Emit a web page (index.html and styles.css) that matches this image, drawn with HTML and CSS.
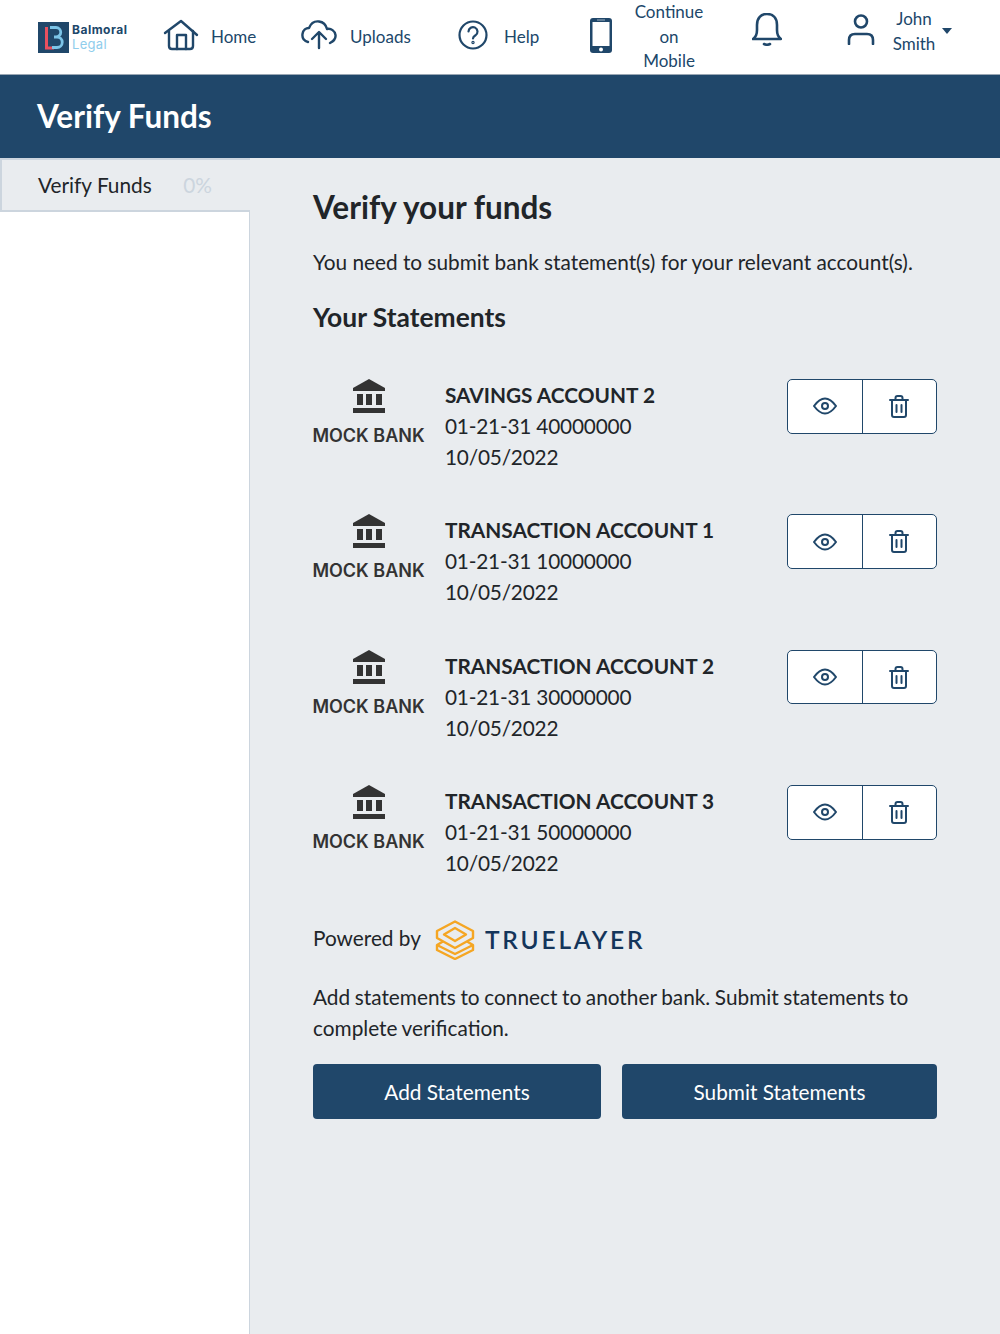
FILE: index.html
```html
<!DOCTYPE html>
<html lang="en">
<head>
  <meta charset="UTF-8" />
  <meta name="viewport" content="width=device-width, initial-scale=1.0" />
  <title>Verify Funds</title>
  <link rel="stylesheet" href="styles.css">
</head>
<body>
  <header class="topbar">
    <a class="logo" href="#">
      <svg class="logo-mark" viewBox="0 0 31 31" width="31" height="31">
        <rect width="31" height="31" fill="#20476a"/>
        <path d="M8.500 5v21h7.500" fill="none" stroke="#e8505f" stroke-width="3"/>
        <path d="M12 5.500h6a4.600 4.600 0 0 1 0 9.500h-2h3a5 5 0 0 1 0 10.500h-5" fill="none" stroke="#7cc4e8" stroke-width="2.800"/>
      </svg>
      <span class="logo-text"><b>Balmoral</b><i>Legal</i></span>
    </a>
    <a class="nav-item nav-home" href="#">
      <svg width="36" height="32" viewBox="0 0 36 32" fill="none" stroke="#20476a" stroke-width="2.400" stroke-linecap="round" stroke-linejoin="round"><path d="M2 14 18 2l16 14"/><path d="M6 12v15q0 3 3 3h18q3 0 3-3V12"/><path d="M14 30V16h9v14"/></svg>
      <span>Home</span>
    </a>
    <a class="nav-item nav-uploads" href="#">
      <svg width="36" height="30" viewBox="0 0 36 30" fill="none" stroke="#20476a" stroke-width="2.400" stroke-linecap="round" stroke-linejoin="round"><path d="M7 22C3 21 1 18 1.500 14S5 8 8 8C10 3 14 1 18 1.500S25 5 26 9c4-1 8 2 8.500 6S33 21 29 23"/><path d="M18 28V13M11 19l7-7 7 7"/></svg>
      <span>Uploads</span>
    </a>
    <a class="nav-item nav-help" href="#">
      <svg width="30" height="30" viewBox="0 0 30 30" fill="none" stroke="#20476a" stroke-width="2.200" stroke-linecap="round"><circle cx="15" cy="15" r="13.500"/><path d="M10.500 11.500a4.500 4.500 0 1 1 7 3.800c-1.600 1-2.500 1.700-2.500 3.200"/><circle cx="15" cy="22.500" r=".6"/></svg>
      <span>Help</span>
    </a>
    <a class="nav-item nav-mobile" href="#">
      <svg width="22" height="35" viewBox="0 0 22 35"><rect width="22" height="35" rx="3" fill="#20476a"/><rect x="2.500" y="4" width="17" height="24" fill="#fff"/><circle cx="11" cy="31.500" r="2" fill="#fff"/><rect x="7" y="1.500" width="8" height="1" fill="#9fb3c4"/></svg>
      <span class="nav-mobile-text">Continue on Mobile</span>
    </a>
    <a class="nav-bell" href="#">
      <svg width="30" height="33" viewBox="0 0 30 33" fill="none" stroke="#20476a" stroke-width="2.600" stroke-linecap="round" stroke-linejoin="round"><path d="M1 26c3-2 4-5 4-9v-5C5 5 9 1 15 1s10 4 10 11v5c0 4 1 7 4 9z"/><path d="M12 31q3 1.500 6 0"/></svg>
    </a>
    <a class="nav-item nav-user" href="#">
      <svg width="28" height="31" viewBox="0 0 28 31" fill="none" stroke="#20476a" stroke-width="2.600" stroke-linecap="round"><circle cx="14" cy="7.500" r="6"/><path d="M2 30v-4q0-6 6-6h12q6 0 6 6v4"/></svg>
      <span class="nav-user-text">John Smith</span>
      <span class="caret"></span>
    </a>
  </header>

  <div class="banner"><h1>Verify Funds</h1></div>

  <div class="layout">
    <aside class="sidebar">
      <div class="step">
        <span>Verify Funds</span>
        <span class="step-pct">0%</span>
      </div>
    </aside>

    <main class="content">
      <h2>Verify your funds</h2>
      <p class="intro">You need to submit bank statement(s) for your relevant account(s).</p>
      <h3>Your Statements</h3>

      <div class="statements">
        <div class="statement">
          <div class="bank">
            <svg width="32" height="34" viewBox="0 0 32 34" fill="#333"><path d="M16 0 32 9v3H0V9z"/><rect x="4" y="15" width="6" height="11"/><rect x="13" y="15" width="6" height="11"/><rect x="23" y="15" width="6" height="11"/><rect y="29" width="32" height="5"/></svg>
            <span>MOCK BANK</span>
          </div>
          <div class="details">
            <strong>SAVINGS ACCOUNT 2</strong>
            <span>01-21-31 40000000</span>
            <span>10/05/2022</span>
          </div>
          <div class="actions">
            <button><svg width="24" height="18" viewBox="0 0 24 18" fill="none" stroke="#20476a" stroke-width="2"><path d="M1 9q11-15 22 0Q12 24 1 9z"/><circle cx="12" cy="9" r="3"/></svg></button>
            <button><svg width="20" height="23" viewBox="0 0 20 23" fill="none" stroke="#20476a" stroke-width="2" stroke-linecap="round"><path d="M1 5h18M6.500 5V3q0-2 2-2h3q2 0 2 2v2M3 5v15q0 2 2 2h10q2 0 2-2V5M7.500 10v7M12.500 10v7"/></svg></button>
          </div>
        </div>

        <div class="statement">
          <div class="bank">
            <svg width="32" height="34" viewBox="0 0 32 34" fill="#333"><path d="M16 0 32 9v3H0V9z"/><rect x="4" y="15" width="6" height="11"/><rect x="13" y="15" width="6" height="11"/><rect x="23" y="15" width="6" height="11"/><rect y="29" width="32" height="5"/></svg>
            <span>MOCK BANK</span>
          </div>
          <div class="details">
            <strong>TRANSACTION ACCOUNT 1</strong>
            <span>01-21-31 10000000</span>
            <span>10/05/2022</span>
          </div>
          <div class="actions">
            <button><svg width="24" height="18" viewBox="0 0 24 18" fill="none" stroke="#20476a" stroke-width="2"><path d="M1 9q11-15 22 0Q12 24 1 9z"/><circle cx="12" cy="9" r="3"/></svg></button>
            <button><svg width="20" height="23" viewBox="0 0 20 23" fill="none" stroke="#20476a" stroke-width="2" stroke-linecap="round"><path d="M1 5h18M6.500 5V3q0-2 2-2h3q2 0 2 2v2M3 5v15q0 2 2 2h10q2 0 2-2V5M7.500 10v7M12.500 10v7"/></svg></button>
          </div>
        </div>

        <div class="statement">
          <div class="bank">
            <svg width="32" height="34" viewBox="0 0 32 34" fill="#333"><path d="M16 0 32 9v3H0V9z"/><rect x="4" y="15" width="6" height="11"/><rect x="13" y="15" width="6" height="11"/><rect x="23" y="15" width="6" height="11"/><rect y="29" width="32" height="5"/></svg>
            <span>MOCK BANK</span>
          </div>
          <div class="details">
            <strong>TRANSACTION ACCOUNT 2</strong>
            <span>01-21-31 30000000</span>
            <span>10/05/2022</span>
          </div>
          <div class="actions">
            <button><svg width="24" height="18" viewBox="0 0 24 18" fill="none" stroke="#20476a" stroke-width="2"><path d="M1 9q11-15 22 0Q12 24 1 9z"/><circle cx="12" cy="9" r="3"/></svg></button>
            <button><svg width="20" height="23" viewBox="0 0 20 23" fill="none" stroke="#20476a" stroke-width="2" stroke-linecap="round"><path d="M1 5h18M6.500 5V3q0-2 2-2h3q2 0 2 2v2M3 5v15q0 2 2 2h10q2 0 2-2V5M7.500 10v7M12.500 10v7"/></svg></button>
          </div>
        </div>

        <div class="statement">
          <div class="bank">
            <svg width="32" height="34" viewBox="0 0 32 34" fill="#333"><path d="M16 0 32 9v3H0V9z"/><rect x="4" y="15" width="6" height="11"/><rect x="13" y="15" width="6" height="11"/><rect x="23" y="15" width="6" height="11"/><rect y="29" width="32" height="5"/></svg>
            <span>MOCK BANK</span>
          </div>
          <div class="details">
            <strong>TRANSACTION ACCOUNT 3</strong>
            <span>01-21-31 50000000</span>
            <span>10/05/2022</span>
          </div>
          <div class="actions">
            <button><svg width="24" height="18" viewBox="0 0 24 18" fill="none" stroke="#20476a" stroke-width="2"><path d="M1 9q11-15 22 0Q12 24 1 9z"/><circle cx="12" cy="9" r="3"/></svg></button>
            <button><svg width="20" height="23" viewBox="0 0 20 23" fill="none" stroke="#20476a" stroke-width="2" stroke-linecap="round"><path d="M1 5h18M6.500 5V3q0-2 2-2h3q2 0 2 2v2M3 5v15q0 2 2 2h10q2 0 2-2V5M7.500 10v7M12.500 10v7"/></svg></button>
          </div>
        </div>
      </div>

      <div class="powered">
        <span class="powered-label">Powered by</span>
        <svg width="40" height="40" viewBox="0 0 40 40" fill="none" stroke="#f5a623" stroke-width="2.400" stroke-linejoin="round"><path d="M20 1.500 38 11v7L20 28 2 18v-7z"/><path d="M20 8l11 6.500L20 21 9 14.500z"/><path d="M8 21.500 2 25v5l18 9 18-9v-5l-6-3.500"/><path d="M2 25l18 9 18-9"/></svg>
        <span class="truelayer">TRUELAYER</span>
      </div>

      <p class="note">Add statements to connect to another bank. Submit statements to complete verification.</p>

      <div class="cta">
        <button class="btn btn-add">Add Statements</button>
        <button class="btn btn-submit">Submit Statements</button>
      </div>
    </main>
  </div>
</body>
</html>
```

FILE: styles.css
```css
* {
  box-sizing: border-box;
}
body {
  font-family: Lato, sans-serif;
  margin: 0;
  padding: 0;
  background: #e9ecef;
  color: #212529;
  font-size: 20.800px;
  line-height: 31px;
}
a {
  color: #20476a;
  text-decoration: none;
}
.topbar {
  display: flex;
  align-items: center;
  height: 75px;
  padding-left: 38px;
  background: #fff;
  border-bottom: 1px solid #9aa7b4;
  font-size: 17px;
  line-height: 24.500px;
}
.topbar svg {
  margin-top: -4px;
}
.logo {
  display: flex;
  align-items: center;
  gap: 3px;
  width: 125px;
}
.logo .logo-mark {
  flex: none;
  margin-top: 0;
}
.logo-text {
  display: flex;
  flex-direction: column;
  font-family: Inter, sans-serif;
  font-size: 12px;
  line-height: 14px;
}
.logo-text b {
  font-weight: 700;
  letter-spacing: 0.500px;
}
.logo-text i {
  font-style: normal;
  font-size: 13px;
  letter-spacing: 0.300px;
  color: #8fcdec;
}
.nav-item {
  display: flex;
  align-items: center;
}
.nav-home {
  gap: 12px;
  width: 138px;
}
.nav-uploads {
  gap: 13px;
  width: 157px;
}
.nav-help {
  gap: 16px;
  width: 132px;
}
.nav-mobile {
  gap: 21px;
  width: 162px;
}
.nav-mobile-text {
  width: 72px;
  text-align: center;
}
.nav-bell {
  display: flex;
  width: 95px;
}
.nav-bell svg {
  margin-top: -15px;
}
.nav-user svg {
  margin-top: -16px;
}
.nav-user-text {
  width: 60px;
  margin: -12px 0 0 9px;
  text-align: center;
  line-height: 25px;
}
.caret {
  width: 0;
  height: 0;
  margin: -12px 0 0 -2px;
  border-left: 5.500px solid transparent;
  border-right: 5.500px solid transparent;
  border-top: 6px solid #20476a;
}
.banner {
  height: 83px;
  padding-left: 37px;
  display: flex;
  align-items: center;
  background: #20476a;
  color: #fff;
}
.banner h1 {
  margin: 0;
  font-size: 31.500px;
  font-weight: 700;
  line-height: 1.200;
}
.layout {
  display: flex;
  min-height: 1176px;
}
.sidebar {
  width: 250px;
  flex: none;
  background: #fff;
  border-right: 1px solid #ccd5de;
}
.step {
  display: flex;
  justify-content: space-between;
  align-items: center;
  height: 54px;
  margin-right: -1px;
  padding: 0 38px 2px 36px;
  background: #e9ecef;
  border: 2px solid #ccd5de;
  border-right: 0;
}
.step-pct {
  color: #ccd5de;
}
.content {
  width: 624px;
  margin-left: 63px;
  padding-top: 29px;
}
h2 {
  margin: 0;
  font-size: 31.500px;
  line-height: 40px;
  font-weight: 700;
}
.intro {
  margin: 19px 0 0;
}
h3 {
  margin: 25px 0 0;
  font-size: 26.400px;
  line-height: 31px;
  font-weight: 700;
}
.statements {
  margin-top: 46px;
}
.statement {
  display: flex;
  align-items: flex-start;
  height: 135.400px;
}
.statement:last-child {
  height: 133px;
}
.bank {
  display: flex;
  flex-direction: column;
  align-items: center;
  width: 113px;
  margin-left: -1px;
  color: #333;
  font-family: Inter, sans-serif;
  font-size: 18px;
  font-weight: 600;
  line-height: 24px;
  white-space: nowrap;
}
.bank span {
  margin-top: 11px;
}
.details {
  display: flex;
  flex-direction: column;
  margin-left: 20px;
  flex: 1;
}
.details span {
  letter-spacing: -0.200px;
}
.details strong {
  font-weight: 700;
}
.actions {
  display: flex;
  width: 150px;
  height: 54.500px;
  background: #fff;
  border: 1px solid #20476a;
  border-radius: 5px;
}
.actions button {
  flex: 1;
  display: flex;
  align-items: center;
  justify-content: center;
  padding: 0;
  background: none;
  border: 0;
}
.actions button + button {
  border-left: 1px solid #20476a;
}
.powered {
  display: flex;
  align-items: center;
  gap: 14px;
  height: 40px;
}
.powered-label {
  margin-top: -2px;
}
.powered svg {
  margin-top: 3px;
}
.truelayer {
  margin-left: -4px;
  margin-top: 3px;
  color: #14355a;
  font-size: 24.500px;
  font-weight: 600;
  letter-spacing: 2.800px;
}
.note {
  margin: 23px 0 0;
  word-spacing: -0.700px;
}
.cta {
  display: flex;
  gap: 21px;
  margin-top: 21px;
}
.btn {
  height: 55px;
  background: #20476a;
  color: #fff;
  border: none;
  border-radius: 4px;
  font-family: Lato, sans-serif;
  font-size: 20.800px;
}
.btn-add {
  width: 288px;
}
.btn-submit {
  width: 315px;
}
```
